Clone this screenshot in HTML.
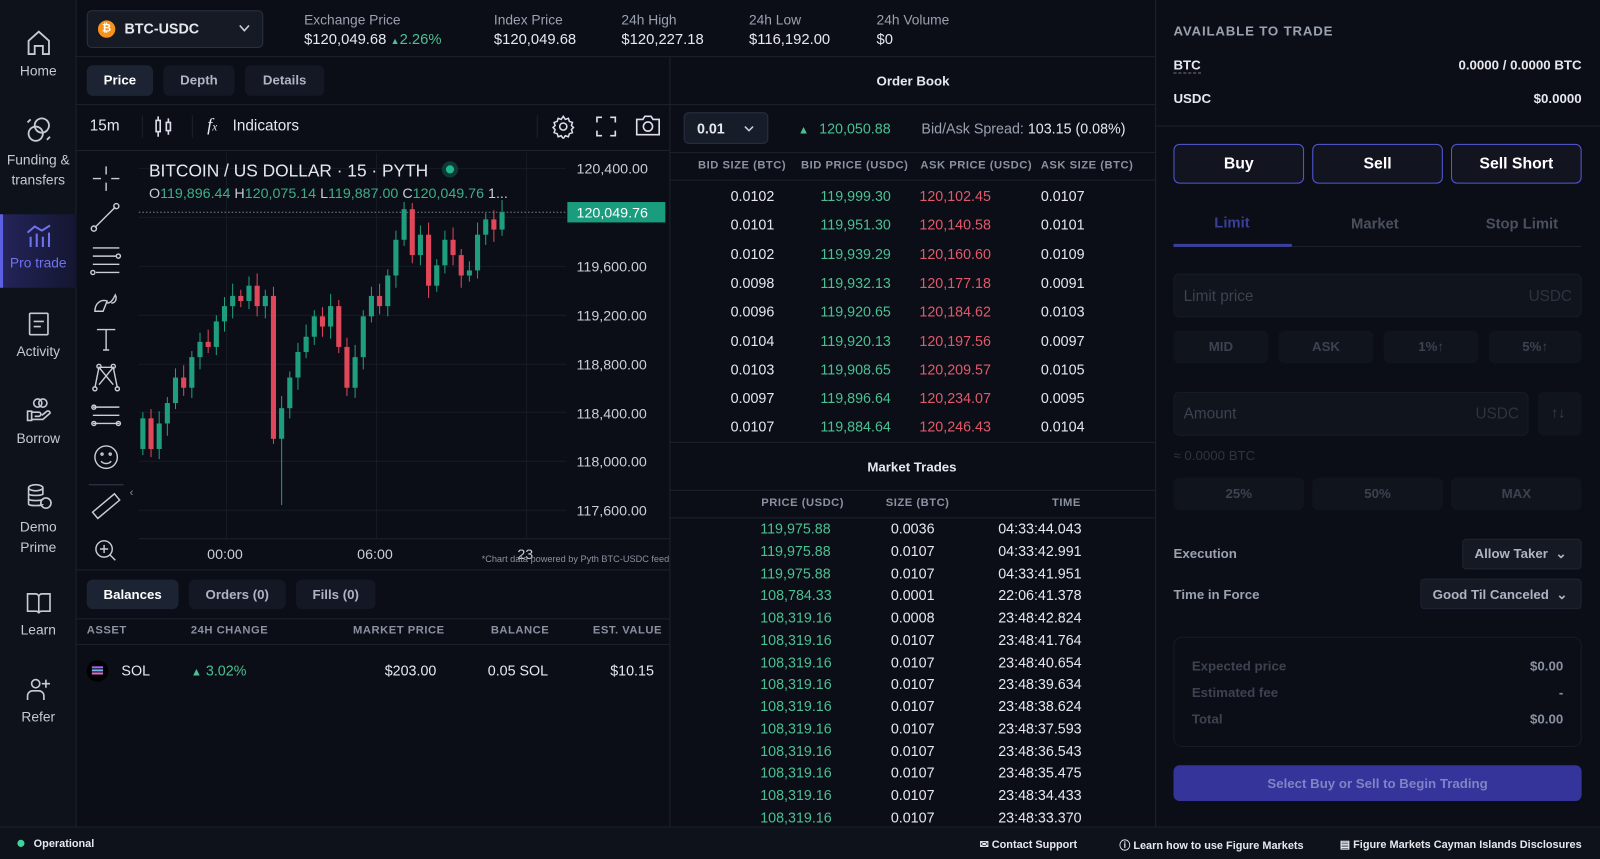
<!DOCTYPE html>
<html><head><meta charset="utf-8">
<style>
*{box-sizing:border-box;margin:0;padding:0}
html,body{width:1600px;height:859px;overflow:hidden;background:#0b0e16}
body{font-family:"Liberation Sans",sans-serif;color:#e6e8ee}
#w{position:absolute;left:0;top:0;width:1568px;height:842px;transform:scale(1.020408);transform-origin:0 0;background:#0b0e16}
.a{position:absolute}
.t{position:absolute;white-space:nowrap}
.g{color:#4cbf93}.r{color:#e0596a}
.mut{color:#9aa1b1}
.ln{position:absolute;background:#1c2230}
.nav{position:absolute;left:0;width:75px;text-align:center;font-size:13.5px;color:#c5cad6}
.nav svg{display:block;margin:0 auto 6px}
.btn{position:absolute;border-radius:6px;background:#161c28;font-size:13px;font-weight:bold;text-align:center;color:#aeb4c2}
.hd{font-size:11px;font-weight:bold;color:#8a91a2;letter-spacing:.5px}
.sb{position:absolute;white-space:nowrap;top:821px;font-size:10.7px;font-weight:bold}
</style></head><body><div id="w">

<!-- sidebar -->
<div class="a" style="left:0;top:0;width:75px;height:810px;background:#0e121b;border-right:1px solid #1c2230"></div>
<div class="a" style="left:0;top:210px;width:75px;height:72px;background:linear-gradient(90deg,#24245a,#141630)"></div>
<div class="a" style="left:0;top:210px;width:3px;height:72px;background:#5b5fe0"></div>
<div class="nav" style="top:28px"><svg width="26" height="28" viewBox="0 0 26 28" fill="none" stroke="#c5cad6" stroke-width="1.8"><path d="M3 12 L13 3 L23 12 V25 H17 V17 H9 V25 H3 Z"/></svg>Home</div>
<div class="nav" style="top:113px;line-height:20px"><svg width="28" height="28" viewBox="0 0 28 28" fill="none" stroke="#c5cad6" stroke-width="1.8"><circle cx="17" cy="10" r="7"/><circle cx="11" cy="18" r="7"/><path d="M3 7 l3-3 M22 24 l3-3"/></svg>Funding &amp;<br>transfers</div>
<div class="nav" style="top:218px;color:#6f73f0"><svg width="28" height="26" viewBox="0 0 28 26" fill="none" stroke="#6f73f0" stroke-width="2"><path d="M3 10 L10 4 L17 8 L25 3"/><path d="M6 24 V14 M12 24 V11 M18 24 V14 M24 24 V10"/></svg>Pro trade</div>
<div class="nav" style="top:305px"><svg width="22" height="26" viewBox="0 0 22 26" fill="none" stroke="#c5cad6" stroke-width="1.6"><rect x="2" y="2" width="18" height="21" rx="1"/><path d="M6 10 H16 M6 15 H13"/></svg>Activity</div>
<div class="nav" style="top:388px"><svg width="28" height="28" viewBox="0 0 28 28" fill="none" stroke="#c5cad6" stroke-width="1.6"><circle cx="13" cy="7" r="4"/><circle cx="18" cy="7" r="4"/><path d="M3 15 H7 V24 H3 Z M7 16 H14 a2 2 0 0 1 0 4 H10 M7 23 H18 L25 17 a2 2 0 0 0 -3 -2 L17 19"/></svg>Borrow</div>
<div class="nav" style="top:473px;line-height:20px"><svg width="28" height="28" viewBox="0 0 28 28" fill="none" stroke="#c5cad6" stroke-width="1.6"><ellipse cx="11" cy="5" rx="7" ry="3"/><path d="M4 5 V21 c0 2 14 2 14 0 M4 11 c0 2 14 2 14 0 M4 16 c0 2 14 2 14 0 M18 5 V12"/><circle cx="21" cy="20" r="5"/></svg>Demo<br>Prime</div>
<div class="nav" style="top:578px"><svg width="26" height="26" viewBox="0 0 26 26" fill="none" stroke="#c5cad6" stroke-width="1.6"><path d="M2 4 H10 a3 3 0 0 1 3 3 V23 a3 3 0 0 0 -3 -2 H2 Z M24 4 H16 a3 3 0 0 0 -3 3 V23 a3 3 0 0 1 3 -2 H24 Z"/></svg>Learn</div>
<div class="nav" style="top:663px"><svg width="26" height="26" viewBox="0 0 26 26" fill="none" stroke="#c5cad6" stroke-width="1.6"><circle cx="10" cy="7" r="4"/><path d="M2 23 V19 a5 5 0 0 1 5 -5 H13 a5 5 0 0 1 5 5 V23 M20 3 V11 M16 7 H24"/></svg>Refer</div>

<!-- top bar -->
<div class="ln" style="left:75px;top:55px;width:1057px;height:1px"></div>
<div class="a" style="left:85px;top:10px;width:173px;height:37px;border:1px solid #2a3142;border-radius:5px;background:#151a25"></div>
<div class="a" style="left:96px;top:20px;width:17px;height:17px;border-radius:50%;background:#f7931a;color:#fff;font-size:11px;font-weight:bold;text-align:center;line-height:17px">₿</div>
<div class="t" style="left:122px;top:20px;font-size:14px;font-weight:bold">BTC-USDC</div>
<svg class="a" style="left:234px;top:24px" width="11" height="8" viewBox="0 0 11 8"><path d="M1 1 L5.5 6 L10 1" fill="none" stroke="#ccd" stroke-width="1.6"/></svg>
<div class="t mut" style="left:298px;top:12px;font-size:13.5px">Exchange Price</div>
<div class="t" style="left:298px;top:31px;font-size:14.5px">$120,049.68 <span class="g" style="font-size:9px">▲</span><span class="g">2.26%</span></div>
<div class="t mut" style="left:484px;top:12px;font-size:13.5px">Index Price</div>
<div class="t" style="left:484px;top:31px;font-size:14.5px">$120,049.68</div>
<div class="t mut" style="left:609px;top:12px;font-size:13.5px">24h High</div>
<div class="t" style="left:609px;top:31px;font-size:14.5px">$120,227.18</div>
<div class="t mut" style="left:734px;top:12px;font-size:13.5px">24h Low</div>
<div class="t" style="left:734px;top:31px;font-size:14.5px">$116,192.00</div>
<div class="t mut" style="left:859px;top:12px;font-size:13.5px">24h Volume</div>
<div class="t" style="left:859px;top:31px;font-size:14.5px">$0</div>

<!-- chart tabs -->
<div class="btn" style="left:85px;top:64px;width:65px;height:30px;line-height:30px;background:#1c2433;color:#fff">Price</div>
<div class="btn" style="left:160px;top:64px;width:70px;height:30px;line-height:30px;background:#131824">Depth</div>
<div class="btn" style="left:240px;top:64px;width:78px;height:30px;line-height:30px;background:#131824">Details</div>
<div class="ln" style="left:75px;top:102px;width:581px;height:1px"></div>
<div class="ln" style="left:656px;top:56px;width:1px;height:754px"></div>
<!-- toolbar -->
<div class="t" style="left:88px;top:115px;font-size:15px">15m</div>
<div class="ln" style="left:139px;top:113px;width:1px;height:22px"></div>
<svg class="a" style="left:150px;top:112px" width="20" height="24" viewBox="0 0 20 24" fill="none" stroke="#dde" stroke-width="1.6"><path d="M5 2 V22 M15 4 V20"/><rect x="3" y="6" width="4" height="11" fill="#0b0e16"/><rect x="13" y="8" width="4" height="8" fill="#0b0e16"/></svg>
<div class="ln" style="left:188px;top:113px;width:1px;height:22px"></div>
<div class="t" style="left:203px;top:112px;font-size:18px;font-style:italic;font-family:'Liberation Serif',serif">f<span style="font-size:11px">x</span></div>
<div class="t" style="left:228px;top:115px;font-size:15px">Indicators</div>
<div class="ln" style="left:526px;top:113px;width:1px;height:22px"></div>
<svg class="a" style="left:540px;top:112px" width="24" height="24" viewBox="0 0 24 24" fill="none" stroke="#dde" stroke-width="1.5"><circle cx="12" cy="12" r="3.5"/><path d="M12 2 l2 3 3-1 1 3 3 1 -1 3 2 2 -2 2 1 3 -3 1 -1 3 -3 -1 -2 3 -2 -3 -3 1 -1 -3 -3 -1 1 -3 -2 -2 2 -2 -1 -3 3 -1 1 -3 3 1 z"/></svg>
<svg class="a" style="left:583px;top:113px" width="22" height="22" viewBox="0 0 22 22" fill="none" stroke="#dde" stroke-width="1.6"><path d="M2 7 V2 H7 M15 2 H20 V7 M20 15 V20 H15 M7 20 H2 V15"/></svg>
<svg class="a" style="left:622px;top:111px" width="26" height="24" viewBox="0 0 26 24" fill="none" stroke="#dde" stroke-width="1.6"><path d="M2 6 H8 L10 3 H16 L18 6 H24 V21 H2 Z"/><circle cx="13" cy="13" r="4.5"/></svg>
<div class="ln" style="left:75px;top:147px;width:581px;height:1px"></div>

<!-- drawing tools -->
<svg class="a" style="left:85px;top:155px" width="40" height="400" viewBox="0 0 40 400" fill="none" stroke="#c9cdd8" stroke-width="1.4">
<path d="M19 8 V16 M19 24 V32 M6 20 H14 M24 20 H32"/>
<path d="M8 68 L28 48"/><circle cx="7" cy="69" r="2.5"/><circle cx="29" cy="47" r="2.5"/>
<path d="M6 88 H32 M6 96 H29 M6 104 H32 M9 112 H32"/><circle cx="31" cy="96" r="2"/><circle cx="6" cy="112" r="2"/>
<path d="M8 150 c0-8 6-12 12-10 l-4 10 z M20 142 c4 0 6-4 8-8 c2 4 0 8 -4 8"/>
<path d="M10 168 H28 M19 168 V188 M16 188 H22"/>
<path d="M8 225 L12 205 L26 205 L30 225 M12 205 L26 222 M26 205 L12 222" /><circle cx="8" cy="226" r="2"/><circle cx="30" cy="226" r="2"/><circle cx="12" cy="204" r="2"/><circle cx="26" cy="204" r="2"/>
<path d="M6 244 H32 M6 252 H32 M6 260 H32"/><circle cx="7" cy="244" r="2"/><circle cx="7" cy="260" r="2"/><circle cx="31" cy="260" r="2"/>
<circle cx="19" cy="293" r="11"/><circle cx="15" cy="290" r="1"/><circle cx="23" cy="290" r="1"/><path d="M14 297 c3 3 7 3 10 0"/>
<path d="M2 320 H36" stroke="#2a3142"/>
<rect x="5" y="337" width="28" height="8" transform="rotate(-40 19 341)"/>
<circle cx="17" cy="383" r="8"/><path d="M13 383 H21 M17 379 V387 M23 389 L28 394"/>
</svg>
<div class="t" style="left:127px;top:477px;font-size:11px;color:#8a91a2">‹</div>

<!-- chart -->
<svg class="a" style="left:130px;top:148px" width="526" height="410" viewBox="130 148 526 410">
<g stroke="#161b26" stroke-width="1">
<path d="M222 150 V528 M369 150 V528 M516 150 V528 M136 165 H555 M136 213 H555 M136 261 H555 M136 309 H555 M136 357 H555 M136 404 H555 M136 452 H555 M136 500 H555"/>
</g>
<path d="M136 528 H656" stroke="#1c2230"/>
<path d="M136 208 H555" stroke="#7a8090" stroke-dasharray="1.5 2"/>
<g stroke-width="1">
<g id="cs"></g>
</g>
<g font-family="Liberation Sans" font-size="14" fill="#c9cdd8">
<text x="565" y="170">120,400.00</text><text x="565" y="266">119,600.00</text><text x="565" y="314">119,200.00</text><text x="565" y="362">118,800.00</text><text x="565" y="410">118,400.00</text><text x="565" y="457">118,000.00</text><text x="565" y="505">117,600.00</text>
<text x="203" y="548">00:00</text><text x="350" y="548">06:00</text><text x="507" y="548">23</text>
</g>
<rect x="556" y="198" width="96" height="20" fill="#1a9c7e"/>
<text x="565" y="213" font-family="Liberation Sans" font-size="14" fill="#fff">120,049.76</text>
<text x="472" y="551" font-family="Liberation Sans" font-size="9" fill="#8a91a2">*Chart data powered by Pyth BTC-USDC feed</text>
<text x="146" y="173" font-family="Liberation Sans" font-size="17" fill="#e6e8ee">BITCOIN / US DOLLAR · 15 · PYTH</text>
<circle cx="441" cy="166" r="8" fill="#0f3a33"/><circle cx="441" cy="166" r="4" fill="#1fb58f"/>
<text x="146" y="194" font-family="Liberation Sans" font-size="14" fill="#c9cdd8">O<tspan fill="#3fae88">119,896.44</tspan> H<tspan fill="#3fae88">120,075.14</tspan> L<tspan fill="#3fae88">119,887.00</tspan> C<tspan fill="#3fae88">120,049.76</tspan> 1...</text>
</svg>

<!-- balances -->
<div class="ln" style="left:75px;top:558px;width:581px;height:1px"></div>
<div class="btn" style="left:85px;top:568px;width:90px;height:29px;line-height:29px;background:#1c2433;color:#fff">Balances</div>
<div class="btn" style="left:185px;top:568px;width:95px;height:29px;line-height:29px;background:#131824">Orders (0)</div>
<div class="btn" style="left:290px;top:568px;width:78px;height:29px;line-height:29px;background:#131824">Fills (0)</div>
<div class="ln" style="left:75px;top:606px;width:581px;height:1px"></div>
<div class="ln" style="left:75px;top:631px;width:581px;height:1px"></div>
<div class="t hd" style="left:85px;top:612px">ASSET</div>
<div class="t hd" style="left:187px;top:612px">24H CHANGE</div>
<div class="t hd" style="left:346px;top:612px">MARKET PRICE</div>
<div class="t hd" style="left:481px;top:612px">BALANCE</div>
<div class="t hd" style="left:581px;top:612px">EST. VALUE</div>
<div class="a" style="left:85px;top:647px;width:21px;height:21px;border-radius:50%;background:#000"></div>
<div class="a" style="left:90px;top:653px;width:11px;height:2px;background:#9b6bff;box-shadow:0 3px 0 #6fb8e0,0 6px 0 #e06bd0"></div>
<div class="t" style="left:119px;top:649px;font-size:14px">SOL</div>
<div class="t g" style="left:187px;top:649px;font-size:14px"><span style="font-size:11px">▲</span> 3.02%</div>
<div class="t" style="left:377px;top:649px;font-size:14px">$203.00</div>
<div class="t" style="left:478px;top:649px;font-size:14px">0.05 SOL</div>
<div class="t" style="left:598px;top:649px;font-size:14px">$10.15</div>

<!-- order book -->
<div class="t" style="left:859px;top:72px;font-size:13px;font-weight:bold">Order Book</div>
<div class="ln" style="left:656px;top:102px;width:476px;height:1px"></div>
<div class="a" style="left:670px;top:110px;width:83px;height:31px;border:1px solid #2a3142;border-radius:5px;background:#161c28"></div>
<div class="t" style="left:683px;top:118px;font-size:14px;font-weight:bold">0.01</div>
<svg class="a" style="left:729px;top:123px" width="10" height="7" viewBox="0 0 10 7"><path d="M1 1 L5 5 L9 1" fill="none" stroke="#ccd" stroke-width="1.5"/></svg>
<div class="t" style="left:782px;top:118px;font-size:14px"><span class="g" style="font-size:11px">▲</span> <span class="g" style="margin-left:6px">120,050.88</span></div>
<div class="t mut" style="left:903px;top:118px;font-size:14px">Bid/Ask Spread: <span style="color:#e6e8ee">103.15 (0.08%)</span></div>
<div class="ln" style="left:656px;top:149px;width:476px;height:1px"></div>
<div class="ln" style="left:656px;top:176px;width:476px;height:1px"></div>
<div class="t hd" style="left:684px;top:156px">BID SIZE (BTC)</div>
<div class="t hd" style="left:785px;top:156px">BID PRICE (USDC)</div>
<div class="t hd" style="left:902px;top:156px">ASK PRICE (USDC)</div>
<div class="t hd" style="left:1020px;top:156px">ASK SIZE (BTC)</div>
<div id="obrows"></div>
<div class="ln" style="left:656px;top:433px;width:476px;height:1px"></div>
<div class="t" style="left:850px;top:450px;font-size:13px;font-weight:bold">Market Trades</div>
<div class="ln" style="left:656px;top:480px;width:476px;height:1px"></div>
<div class="ln" style="left:656px;top:507px;width:476px;height:1px"></div>
<div class="t hd" style="left:746px;top:487px">PRICE (USDC)</div>
<div class="t hd" style="left:868px;top:487px">SIZE (BTC)</div>
<div class="t hd" style="left:1031px;top:487px">TIME</div>

<!-- right panel -->
<div class="ln" style="left:1132px;top:0;width:1px;height:810px"></div>
<div class="t" style="left:1150px;top:23px;font-size:13px;font-weight:bold;color:#9aa1b1;letter-spacing:.8px">AVAILABLE TO TRADE</div>
<div class="t" style="left:1150px;top:56px;font-size:13px;font-weight:bold;border-bottom:1px dashed #777">BTC</div>
<div class="t" style="right:18px;top:56px;font-size:13px;font-weight:bold">0.0000 / 0.0000 BTC</div>
<div class="t" style="left:1150px;top:89px;font-size:13px;font-weight:bold">USDC</div>
<div class="t" style="right:18px;top:89px;font-size:13px;font-weight:bold">$0.0000</div>
<div class="ln" style="left:1133px;top:123px;width:435px;height:1px"></div>
<div class="btn" style="left:1150px;top:141px;width:128px;height:39px;line-height:37px;border:1.5px solid #5558d8;background:#12141f;color:#fff;font-size:15.5px">Buy</div>
<div class="btn" style="left:1286px;top:141px;width:128px;height:39px;line-height:37px;border:1.5px solid #5558d8;background:#12141f;color:#fff;font-size:15.5px">Sell</div>
<div class="btn" style="left:1422px;top:141px;width:128px;height:39px;line-height:37px;border:1.5px solid #5558d8;background:#12141f;color:#fff;font-size:15.5px">Sell Short</div>
<div class="t" style="left:1190px;top:211px;font-size:14.5px;font-weight:bold;color:#3a3f9a">Limit</div>
<div class="t" style="left:1324px;top:212px;font-size:14.5px;font-weight:bold;color:#4a505f">Market</div>
<div class="t" style="left:1456px;top:212px;font-size:14.5px;font-weight:bold;color:#4a505f">Stop Limit</div>
<div class="ln" style="left:1150px;top:241px;width:400px;height:1px"></div>
<div class="a" style="left:1150px;top:239px;width:116px;height:3px;background:#3a3f9a"></div>
<div class="a" style="left:1150px;top:268px;width:400px;height:43px;border-radius:6px;background:#10141d;border:1px solid #161b26"></div>
<div class="t" style="left:1160px;top:282px;font-size:15px;color:#3c4250">Limit price</div>
<div class="t" style="left:1498px;top:282px;font-size:15px;color:#2e3340">USDC</div>
<div class="btn" style="left:1150px;top:324px;width:93px;height:32px;line-height:32px;background:#10141d;color:#3c4250">MID</div>
<div class="btn" style="left:1253px;top:324px;width:93px;height:32px;line-height:32px;background:#10141d;color:#3c4250">ASK</div>
<div class="btn" style="left:1356px;top:324px;width:93px;height:32px;line-height:32px;background:#10141d;color:#3c4250">1%↑</div>
<div class="btn" style="left:1459px;top:324px;width:91px;height:32px;line-height:32px;background:#10141d;color:#3c4250">5%↑</div>
<div class="a" style="left:1150px;top:384px;width:348px;height:43px;border-radius:6px;background:#10141d;border:1px solid #161b26"></div>
<div class="t" style="left:1160px;top:397px;font-size:15px;color:#3c4250">Amount</div>
<div class="t" style="left:1446px;top:397px;font-size:15px;color:#2e3340">USDC</div>
<div class="a" style="left:1507px;top:384px;width:43px;height:43px;border-radius:6px;background:#10141d"></div>
<div class="t" style="left:1520px;top:396px;font-size:14px;color:#3c4250">↑↓</div>
<div class="t" style="left:1150px;top:439px;font-size:13px;color:#2e3340">≈ 0.0000 BTC</div>
<div class="btn" style="left:1150px;top:468px;width:128px;height:32px;line-height:32px;background:#10141d;color:#3c4250">25%</div>
<div class="btn" style="left:1286px;top:468px;width:128px;height:32px;line-height:32px;background:#10141d;color:#3c4250">50%</div>
<div class="btn" style="left:1422px;top:468px;width:128px;height:32px;line-height:32px;background:#10141d;color:#3c4250">MAX</div>
<div class="t" style="left:1150px;top:535px;font-size:13px;font-weight:bold;color:#9aa1b1">Execution</div>
<div class="a" style="left:1433px;top:528px;width:117px;height:30px;border-radius:4px;background:#141924;border:1px solid #1e2431"></div>
<div class="t" style="left:1445px;top:535px;font-size:13px;font-weight:bold;color:#aeb4c2">Allow Taker &nbsp;⌄</div>
<div class="t" style="left:1150px;top:575px;font-size:13px;font-weight:bold;color:#9aa1b1">Time in Force</div>
<div class="a" style="left:1392px;top:567px;width:158px;height:30px;border-radius:4px;background:#141924;border:1px solid #1e2431"></div>
<div class="t" style="left:1404px;top:575px;font-size:13px;font-weight:bold;color:#aeb4c2">Good Til Canceled &nbsp;⌄</div>
<div class="a" style="left:1150px;top:624px;width:400px;height:108px;border-radius:8px;border:1px solid #161b26"></div>
<div class="t" style="left:1168px;top:645px;font-size:13px;font-weight:bold;color:#3c4250">Expected price</div>
<div class="t" style="right:36px;top:645px;font-size:13px;font-weight:bold;color:#8a91a2">$0.00</div>
<div class="t" style="left:1168px;top:671px;font-size:13px;font-weight:bold;color:#3c4250">Estimated fee</div>
<div class="t" style="right:36px;top:671px;font-size:13px;font-weight:bold;color:#8a91a2">-</div>
<div class="t" style="left:1168px;top:697px;font-size:13px;font-weight:bold;color:#3c4250">Total</div>
<div class="t" style="right:36px;top:697px;font-size:13px;font-weight:bold;color:#8a91a2">$0.00</div>
<div class="btn" style="left:1150px;top:750px;width:400px;height:35px;line-height:35px;background:#34349a;color:#8084c4">Select Buy or Sell to Begin Trading</div>

<!-- status bar -->
<div class="a" style="left:0;top:810px;width:1568px;height:32px;background:#0e121b;border-top:1px solid #1c2230"></div>
<div class="a" style="left:17px;top:823px;width:7px;height:7px;border-radius:50%;background:#3dd6a0"></div>
<div class="sb" style="left:33px">Operational</div>
<div class="sb" style="left:960px;width:102px">✉ Contact Support</div>
<div class="sb" style="left:1097px;width:182px">ⓘ Learn how to use Figure Markets</div>
<div class="sb" style="left:1313px;width:237px">▤ Figure Markets Cayman Islands Disclosures</div>

<div id="mt"></div>
</div>
<script>
(function(){
var C=[410,440,415,395,370,380,350,335,340,315,300,290,295,280,300,290,430,400,370,345,330,310,320,300,340,380,350,310,290,300,270,235,205,250,230,280,260,235,250,270,265,230,215,225,208];
var o=440,s='';
for(var i=0;i<C.length;i++){var c=C[i],x=140+8*i,g=c<o,col=g?'#1f9e7f':'#e0475b',t=Math.min(o,c),b=Math.max(o,c);
var wt=t-6-(i%3)*3,wb=b+6+(i%4)*2;if(i==17)wb=495;if(i==32)wt=198;if(i==16)wb=435;
s+='<line x1="'+x+'" x2="'+x+'" y1="'+wt+'" y2="'+wb+'" stroke="'+col+'"/><rect x="'+(x-2.5)+'" y="'+t+'" width="5" height="'+Math.max(b-t,1)+'" fill="'+col+'"/>';o=c;}
document.getElementById('cs').innerHTML=s;
var B=[["0.0102","119,999.30","120,102.45","0.0107"],["0.0101","119,951.30","120,140.58","0.0101"],["0.0102","119,939.29","120,160.60","0.0109"],["0.0098","119,932.13","120,177.18","0.0091"],["0.0096","119,920.65","120,184.62","0.0103"],["0.0104","119,920.13","120,197.56","0.0097"],["0.0103","119,908.65","120,209.57","0.0105"],["0.0097","119,896.64","120,234.07","0.0095"],["0.0107","119,884.64","120,246.43","0.0104"]];
var h='';for(var j=0;j<B.length;j++){var y=184+j*28.3;
h+='<div class="t" style="left:716px;top:'+y+'px;font-size:14px">'+B[j][0]+'</div><div class="t g" style="left:804px;top:'+y+'px;font-size:14px">'+B[j][1]+'</div><div class="t r" style="left:901px;top:'+y+'px;font-size:14px">'+B[j][2]+'</div><div class="t" style="left:1020px;top:'+y+'px;font-size:14px">'+B[j][3]+'</div>';}
document.getElementById('obrows').innerHTML=h;
var M=[["119,975.88","0.0036","04:33:44.043"],["119,975.88","0.0107","04:33:42.991"],["119,975.88","0.0107","04:33:41.951"],["108,784.33","0.0001","22:06:41.378"],["108,319.16","0.0008","23:48:42.824"],["108,319.16","0.0107","23:48:41.764"],["108,319.16","0.0107","23:48:40.654"],["108,319.16","0.0107","23:48:39.634"],["108,319.16","0.0107","23:48:38.624"],["108,319.16","0.0107","23:48:37.593"],["108,319.16","0.0107","23:48:36.543"],["108,319.16","0.0107","23:48:35.475"],["108,319.16","0.0107","23:48:34.433"],["108,319.16","0.0107","23:48:33.370"]];
var m='';for(var k=0;k<M.length;k++){var yy=510+k*21.75;
m+='<div class="t g" style="left:745px;top:'+yy+'px;font-size:14px">'+M[k][0]+'</div><div class="t" style="left:873px;top:'+yy+'px;font-size:14px">'+M[k][1]+'</div><div class="t" style="right:508px;top:'+yy+'px;font-size:14px">'+M[k][2]+'</div>';}
document.getElementById('mt').innerHTML=m;
})();
</script>
</body></html>
